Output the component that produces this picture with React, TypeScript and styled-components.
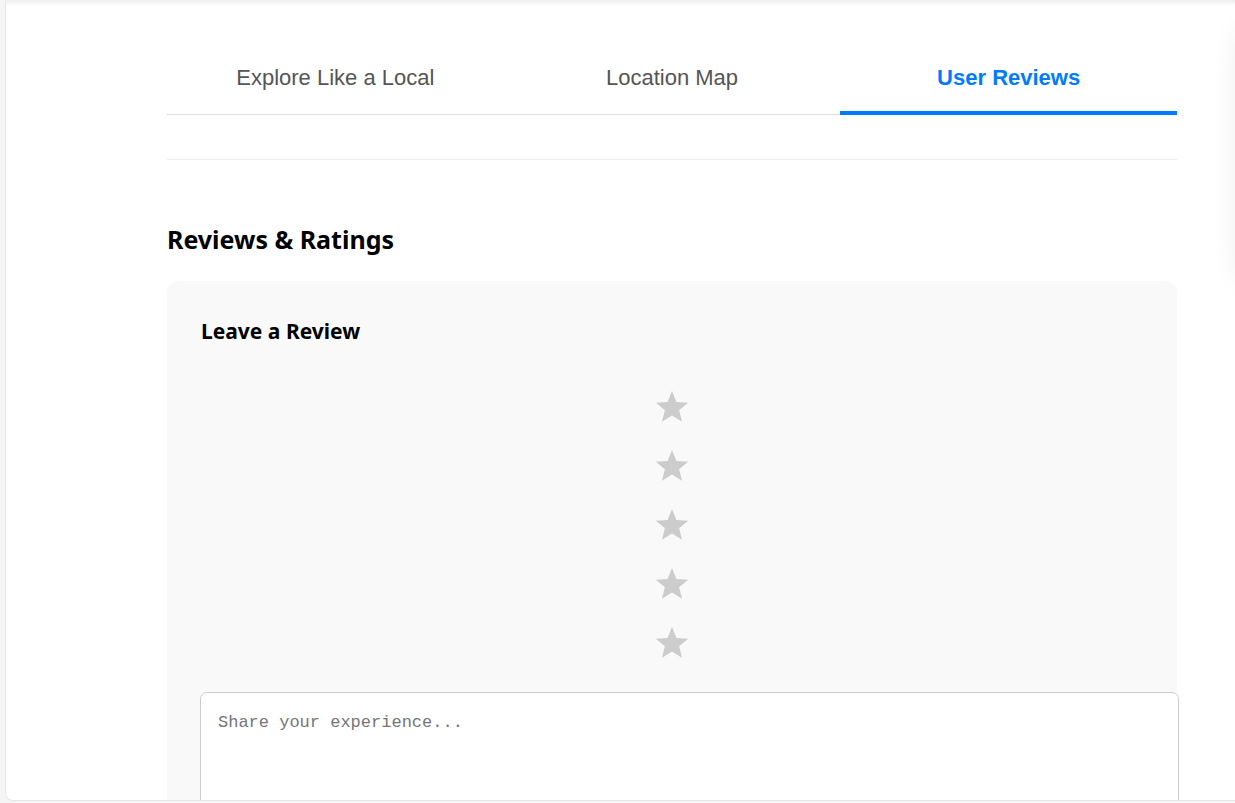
import React, { useState } from 'react';
import styled, { createGlobalStyle } from 'styled-components';

const GlobalStyle = createGlobalStyle`
  html, body {
    margin: 0;
    padding: 0;
    background: #f5f5f5;
    overflow: hidden;
  }
  body {
    font-family: "Liberation Sans", Arial, sans-serif;
  }
`;

const Page = styled.div`
  padding-left: 5px;
  height: 803px;
`;

const Card = styled.div`
  position: relative;
  display: flex;
  align-items: flex-start;
  width: 1500px;
  height: 801px;
  box-sizing: border-box;
  background: #fff;
  border: 1px solid #e6e6e6;
  border-top: none;
  border-radius: 0 0 8px 8px;
  overflow: hidden;
`;

const TopShade = styled.div`
  position: absolute;
  top: 0;
  left: 0;
  right: 0;
  height: 6px;
  background: linear-gradient(rgba(0, 0, 0, 0.07), rgba(0, 0, 0, 0));
`;

const Main = styled.main`
  width: 1010px;
  margin-left: 161px;
  flex-shrink: 0;
`;

const Side = styled.aside`
  width: 300px;
  height: 250px;
  margin: 30px 0 0 64px;
  background: #fff;
  border-radius: 16px;
  box-shadow: 0 0 30px rgba(0, 0, 0, 0.1);
  flex-shrink: 0;
`;

const TabBar = styled.nav`
  display: grid;
  grid-template-columns: repeat(3, 1fr);
  margin-top: 40px;
  border-bottom: 1px solid #ddd;
`;

const Tab = styled.button<{ $active?: boolean }>`
  height: 75px;
  margin-bottom: -1px;
  padding: 4px 0 0;
  border: none;
  border-bottom: 4px solid ${p => (p.$active ? '#007bff' : 'transparent')};
  background: none;
  font-family: "Liberation Sans", Arial, sans-serif;
  font-size: 22px;
  font-weight: ${p => (p.$active ? 700 : 400)};
  color: ${p => (p.$active ? '#007bff' : '#555')};
  cursor: pointer;
`;

const Divider = styled.hr`
  margin: 44px 0 0;
  border: none;
  border-top: 1px solid #eee;
`;

const SectionTitle = styled.h2`
  margin: 63px 0 26px;
  font-family: "Noto Sans", "Open Sans", sans-serif;
  font-size: 25px;
  line-height: 32px;
  font-weight: 700;
  color: #000;
`;

const ReviewBox = styled.section`
  padding: 36px 34px 0;
  background: #f9f9f9;
  border-radius: 12px;
  height: 600px;
`;

const FormTitle = styled.h3`
  margin: 0 0 45px;
  font-family: "Noto Sans", "Open Sans", sans-serif;
  font-size: 21px;
  line-height: 28px;
  font-weight: 700;
  color: #000;
`;

const StarColumn = styled.div`
  display: flex;
  flex-direction: column;
  align-items: center;
  gap: 26px;
`;

const StarButton = styled.button`
  display: block;
  padding: 0;
  border: none;
  background: none;
  line-height: 0;
  cursor: pointer;
`;

const TextArea = styled.textarea`
  display: block;
  box-sizing: content-box;
  width: 943px;
  height: 120px;
  margin: 33px 0 0 -1px;
  padding: 20px 17px 16px;
  border: 1px solid #ccc;
  border-radius: 7px;
  background: #fff;
  font-family: "Liberation Mono", "DejaVu Sans Mono", monospace;
  font-size: 17px;
  resize: none;
  &::placeholder {
    color: #757575;
  }
`;

function Star({ filled }: { filled: boolean }) {
  return (
    <svg width="34" height="33" viewBox="0 0 24 23">
      <path
        d="M12 0.6L15.1 8.3 23.4 8.9 17 14.2 19.1 22.3 12 17.9 4.9 22.3 7 14.2 0.6 8.9 8.9 8.3z"
        fill={filled ? '#f5b301' : '#ccc'}
      />
    </svg>
  );
}

const tabs = ['Explore Like a Local', 'Location Map', 'User Reviews'];

export default function App() {
  const [activeTab, setActiveTab] = useState(2);
  const [rating, setRating] = useState(0);

  return (
    <>
      <GlobalStyle />
      <Page>
        <Card>
          <TopShade />
          <Main>
            <TabBar>
              {tabs.map((t, i) => (
                <Tab key={t} $active={i === activeTab} onClick={() => setActiveTab(i)}>
                  {t}
                </Tab>
              ))}
            </TabBar>
            <Divider />
            <SectionTitle>Reviews &amp; Ratings</SectionTitle>
            <ReviewBox>
              <FormTitle>Leave a Review</FormTitle>
              <StarColumn>
                {[1, 2, 3, 4, 5].map(n => (
                  <StarButton key={n} onClick={() => setRating(n)} aria-label={`${n} stars`}>
                    <Star filled={n <= rating} />
                  </StarButton>
                ))}
              </StarColumn>
              <TextArea placeholder="Share your experience..." />
            </ReviewBox>
          </Main>
          <Side />
        </Card>
      </Page>
    </>
  );
}
